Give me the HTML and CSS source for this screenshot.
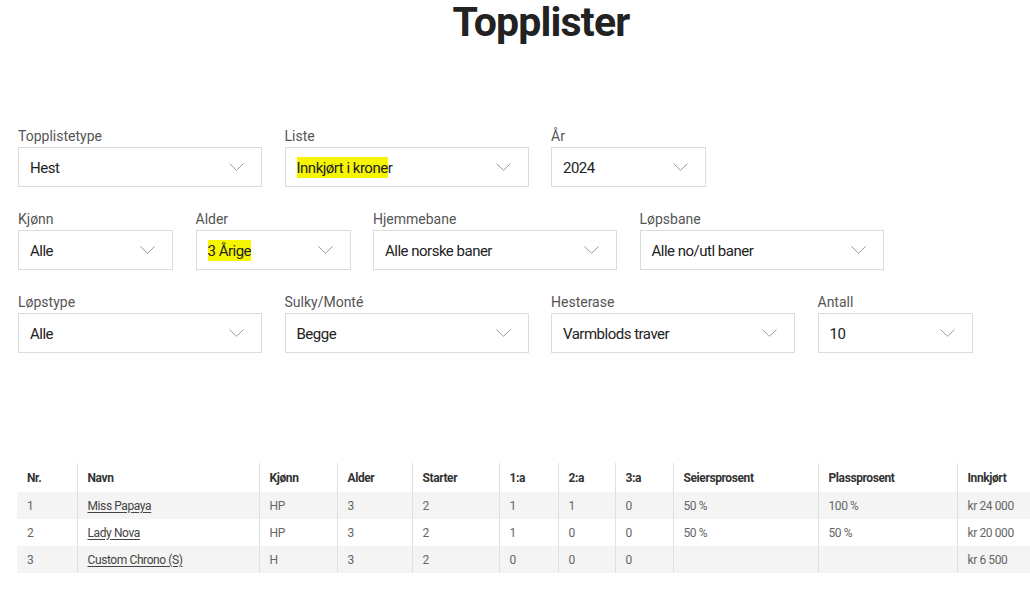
FILE: index.html
```html
<!DOCTYPE html>
<html lang="no">
<head>
<meta charset="utf-8">
<title>Topplister</title>
<link rel="stylesheet" href="styles.css">
</head>
<body>
<h1 class="title">Topplister</h1>
<main class="page">
  <section class="filters">
    <div class="row">
      <div class="field wide">
        <label class="label">Topplistetype</label>
        <div class="select"><span class="value">Hest</span><svg class="chev" width="15" height="8" viewBox="0 0 15 8"><polyline points="0.5,0.5 7.5,7.3 14.5,0.5" fill="none" stroke="#9a9a9a" stroke-width="1"/></svg></div>
      </div>
      <div class="field wide">
        <label class="label">Liste</label>
        <div class="select"><span class="value"><span class="mark">Innkjørt i krone</span>r</span><svg class="chev" width="15" height="8" viewBox="0 0 15 8"><polyline points="0.5,0.5 7.5,7.3 14.5,0.5" fill="none" stroke="#9a9a9a" stroke-width="1"/></svg></div>
      </div>
      <div class="field narrow">
        <label class="label">År</label>
        <div class="select"><span class="value">2024</span><svg class="chev" width="15" height="8" viewBox="0 0 15 8"><polyline points="0.5,0.5 7.5,7.3 14.5,0.5" fill="none" stroke="#9a9a9a" stroke-width="1"/></svg></div>
      </div>
    </div>

    <div class="row">
      <div class="field narrow">
        <label class="label">Kjønn</label>
        <div class="select"><span class="value">Alle</span><svg class="chev" width="15" height="8" viewBox="0 0 15 8"><polyline points="0.5,0.5 7.5,7.3 14.5,0.5" fill="none" stroke="#9a9a9a" stroke-width="1"/></svg></div>
      </div>
      <div class="field narrow">
        <label class="label">Alder</label>
        <div class="select"><span class="value"><span class="mark">3 Årige</span></span><svg class="chev" width="15" height="8" viewBox="0 0 15 8"><polyline points="0.5,0.5 7.5,7.3 14.5,0.5" fill="none" stroke="#9a9a9a" stroke-width="1"/></svg></div>
      </div>
      <div class="field wide">
        <label class="label">Hjemmebane</label>
        <div class="select"><span class="value">Alle norske baner</span><svg class="chev" width="15" height="8" viewBox="0 0 15 8"><polyline points="0.5,0.5 7.5,7.3 14.5,0.5" fill="none" stroke="#9a9a9a" stroke-width="1"/></svg></div>
      </div>
      <div class="field wide">
        <label class="label">Løpsbane</label>
        <div class="select"><span class="value">Alle no/utl baner</span><svg class="chev" width="15" height="8" viewBox="0 0 15 8"><polyline points="0.5,0.5 7.5,7.3 14.5,0.5" fill="none" stroke="#9a9a9a" stroke-width="1"/></svg></div>
      </div>
    </div>

    <div class="row">
      <div class="field wide">
        <label class="label">Løpstype</label>
        <div class="select"><span class="value">Alle</span><svg class="chev" width="15" height="8" viewBox="0 0 15 8"><polyline points="0.5,0.5 7.5,7.3 14.5,0.5" fill="none" stroke="#9a9a9a" stroke-width="1"/></svg></div>
      </div>
      <div class="field wide">
        <label class="label">Sulky/Monté</label>
        <div class="select"><span class="value">Begge</span><svg class="chev" width="15" height="8" viewBox="0 0 15 8"><polyline points="0.5,0.5 7.5,7.3 14.5,0.5" fill="none" stroke="#9a9a9a" stroke-width="1"/></svg></div>
      </div>
      <div class="field wide">
        <label class="label">Hesterase</label>
        <div class="select"><span class="value">Varmblods traver</span><svg class="chev" width="15" height="8" viewBox="0 0 15 8"><polyline points="0.5,0.5 7.5,7.3 14.5,0.5" fill="none" stroke="#9a9a9a" stroke-width="1"/></svg></div>
      </div>
      <div class="field narrow">
        <label class="label">Antall</label>
        <div class="select"><span class="value">10</span><svg class="chev" width="15" height="8" viewBox="0 0 15 8"><polyline points="0.5,0.5 7.5,7.3 14.5,0.5" fill="none" stroke="#9a9a9a" stroke-width="1"/></svg></div>
      </div>
    </div>
  </section>

  <table class="list">
    <colgroup>
      <col class="c-nr"><col class="c-navn"><col class="c-kjonn"><col class="c-alder"><col class="c-starter">
      <col class="c-1a"><col class="c-2a"><col class="c-3a"><col class="c-seier"><col class="c-plass"><col class="c-innkjort">
    </colgroup>
    <thead>
      <tr><th>Nr.</th><th>Navn</th><th>Kjønn</th><th>Alder</th><th>Starter</th><th>1:a</th><th>2:a</th><th>3:a</th><th>Seiersprosent</th><th>Plassprosent</th><th>Innkjørt</th></tr>
    </thead>
    <tbody>
      <tr class="stripe"><td>1</td><td><a class="horse" href="#">Miss Papaya</a></td><td>HP</td><td>3</td><td>2</td><td>1</td><td>1</td><td>0</td><td>50 %</td><td>100 %</td><td>kr 24 000</td></tr>
      <tr><td>2</td><td><a class="horse" href="#">Lady Nova</a></td><td>HP</td><td>3</td><td>2</td><td>1</td><td>0</td><td>0</td><td>50 %</td><td>50 %</td><td>kr 20 000</td></tr>
      <tr class="stripe"><td>3</td><td><a class="horse" href="#">Custom Chrono (S)</a></td><td>H</td><td>3</td><td>2</td><td>0</td><td>0</td><td>0</td><td></td><td></td><td>kr 6 500</td></tr>
    </tbody>
  </table>
</main>
</body>
</html>
```

FILE: styles.css
```css
html, body {
  margin: 0;
  padding: 0;
  overflow: hidden;
  background: #ffffff;
}

body {
  font-family: Roboto, "Noto Sans", "Liberation Sans", sans-serif;
  color: #222;
}

.title {
  margin: 0 0 83px 0;
  padding-left: 52px;
  font-size: 41px;
  line-height: 44px;
  font-weight: 700;
  letter-spacing: -0.8px;
  text-align: center;
  color: #222;
}

.page {
  padding: 0 0 0 18px;
}

.filters {
  display: flex;
  flex-direction: column;
  gap: 23px;
}

.row {
  display: flex;
  gap: 22.5px;
}

.field {
  display: flex;
  flex-direction: column;
  gap: 2px;
}

.field.wide { width: 244px; }
.field.narrow { width: 155px; }

.label {
  font-size: 14px;
  line-height: 18px;
  color: #555;
}

.select {
  box-sizing: border-box;
  height: 40px;
  border: 1px solid #dcdcdc;
  background: #fff;
  display: flex;
  align-items: center;
  justify-content: space-between;
  padding: 0 17px 0 11px;
}

.value {
  font-size: 15px;
  letter-spacing: -0.5px;
  color: #222;
  padding-top: 1px;
}

.mark {
  background: #f6f600;
  padding: 2px 0 1px;
}

.chev {
  display: block;
  flex: none;
}

.list {
  margin: 110px 0 0 -1px;
  border-collapse: collapse;
  table-layout: fixed;
  width: 1020px;
  font-size: 12px;
  letter-spacing: -0.4px;
}

.c-nr { width: 60px; }
.c-navn { width: 182px; }
.c-kjonn { width: 78px; }
.c-alder { width: 75px; }
.c-starter { width: 87px; }
.c-1a { width: 59px; }
.c-2a { width: 57px; }
.c-3a { width: 58px; }
.c-seier { width: 145px; }
.c-plass { width: 139px; }
.c-innkjort { width: 80px; }

.list th, .list td {
  text-align: left;
  padding: 0 10px;
  white-space: nowrap;
  overflow: hidden;
}

.list th + th, .list td + td {
  border-left: 1px solid #e0e0e0;
}

.list th {
  height: 29px;
  font-weight: 700;
  color: #333;
}

.list td {
  height: 27px;
  color: #666;
}

.list tr.stripe td {
  background: #f4f4f4;
}

.horse {
  color: #444;
  text-decoration: underline;
  text-underline-offset: 2px;
}
```
